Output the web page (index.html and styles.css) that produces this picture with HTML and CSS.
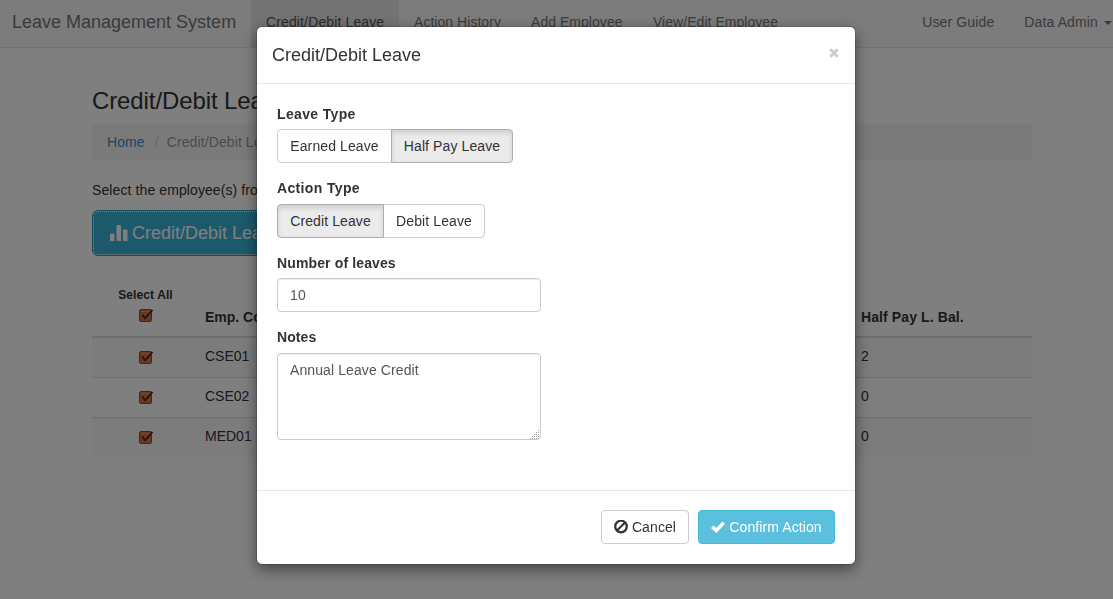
FILE: index.html
```html
<!DOCTYPE html>
<html lang="en">
<head>
<meta charset="utf-8">
<title>Leave Management System</title>
<link rel="stylesheet" href="styles.css">
</head>
<body>
<nav class="navbar">
  <a class="brand">Leave Management System</a>
  <a class="nav-link active">Credit/Debit Leave</a>
  <a class="nav-link history">Action History</a>
  <a class="nav-link add">Add Employee</a>
  <a class="nav-link edit">View/Edit Employee</a>
  <div class="nav-right">
    <a class="nav-link">User Guide</a>
    <a class="nav-link">Data Admin<span class="caret"></span></a>
  </div>
</nav>
<main class="container">
  <h1 class="page-title">Credit/Debit Leave</h1>
  <div class="breadcrumb"><a class="home">Home</a><span class="sep">/</span><span class="current">Credit/Debit Leave</span></div>
  <p class="lead">Select the employee(s) from</p>
  <button class="btn-lg"><svg class="stats" viewBox="0 0 18 18"><path d="M0 10.500q0-1 1-1h2.500q1 0 1 1V17H0zM6.500 2q0-1 1-1H10q1 0 1 1v15H6.500zM13 6.500q0-1 1-1h2.500q1 0 1 1V17H13z"/></svg><span>Credit/Debit Leave</span></button>
  <table class="employees">
    <thead><tr><th class="check"><span class="select-all">Select All</span><svg class="tick" viewBox="0 0 15 13"><use href="#tick"/></svg></th><th class="code">Emp. Code</th><th class="bal">Half Pay L. Bal.</th></tr></thead>
    <tbody>
      <tr><td class="check"><svg class="tick" viewBox="0 0 15 13"><use href="#tick"/></svg></td><td class="code">CSE01</td><td class="bal">2</td></tr>
      <tr><td class="check"><svg class="tick" viewBox="0 0 15 13"><use href="#tick"/></svg></td><td class="code">CSE02</td><td class="bal">0</td></tr>
      <tr><td class="check"><svg class="tick" viewBox="0 0 15 13"><use href="#tick"/></svg></td><td class="code">MED01</td><td class="bal">0</td></tr>
    </tbody>
  </table>
</main>
<svg class="defs"><symbol id="tick" viewBox="0 0 15 13"><rect x=".5" y=".5" width="12" height="12" rx="1.500" fill="#d07048" stroke="#8c4a2c"/><path d="M2 2.500h9" stroke="#e8936a"/><path d="M3 5.500l3 3.800L13.500.8" fill="none" stroke="#4c2a1c" stroke-width="1.800"/></symbol></svg>
<div class="backdrop">
  <section class="modal">
    <header class="modal-header"><h2 class="modal-title">Credit/Debit Leave</h2><svg class="close" viewBox="0 0 10 10"><path d="M1.300 1.300l7.400 7.400M8.700 1.300L1.300 8.700" stroke="#ccc" stroke-width="2.900"/></svg></header>
    <div class="modal-body">
      <div class="field"><label class="label l-type">Leave Type</label><div class="group"><button class="btn earned">Earned Leave</button><button class="btn half on">Half Pay Leave</button></div></div>
      <div class="field"><label class="label a-type">Action Type</label><div class="group"><button class="btn credit on">Credit Leave</button><button class="btn debit">Debit Leave</button></div></div>
      <div class="field"><label class="label number">Number of leaves</label><input class="control" value="10"></div>
      <div class="field"><label class="label">Notes</label><div class="notes"><textarea class="control area">Annual Leave Credit</textarea><svg class="grip" viewBox="0 0 10 10"><path d="M8 0h1v1H8zM6 2h1v1H6zM8 2h1v1H8zM4 4h1v1H4zM6 4h1v1H6zM8 4h1v1H8zM2 6h1v1H2zM4 6h1v1H4zM6 6h1v1H6zM8 6h1v1H8zM0 8h1v1H0zM2 8h1v1H2zM4 8h1v1H4zM6 8h1v1H6zM8 8h1v1H8z" fill="#999"/></svg></div></div>
    </div>
    <footer class="modal-footer">
      <button class="btn cancel"><svg class="icon" viewBox="0 0 14 14"><circle cx="7" cy="6.500" r="5.800" fill="none" stroke="#333" stroke-width="2.300"/><path d="M3 10.500l8-8" stroke="#333" stroke-width="2.200"/></svg>Cancel</button>
      <button class="btn confirm"><svg class="icon" viewBox="0 0 14 14"><path d="M0 8l2.500-2.500 2.800 2.600L11.500 1.500 14 4l-8.700 9z" fill="#fff"/></svg>Confirm Action</button>
    </footer>
  </section>
</div>
</body>
</html>
```
FILE: styles.css
```css
* { box-sizing: border-box; }
html, body { height: 100%; overflow: hidden; }
body { margin: 0; background: #fff; color: #333; font: 14px/20px "Liberation Sans", Arial, sans-serif; letter-spacing: .1px; }
button, input, textarea { font: inherit; letter-spacing: inherit; }

.navbar { display: flex; height: 48px; background: #f8f8f8; border-bottom: 1px solid #e7e7e7; color: #777; white-space: nowrap; }
.brand { width: 251px; padding: 12px 0 0 12px; font-size: 18px; letter-spacing: 0; }
.nav-link { padding: 12px 15px 0; letter-spacing: .04px; }
.nav-link.active { width: 148px; background: #e7e7e7; color: #555; letter-spacing: .13px; }
.nav-link.history { width: 117px; }
.nav-link.add { width: 122px; }
.nav-right { display: flex; margin-left: auto; margin-right: -14px; }
.nav-right .nav-link { letter-spacing: .13px; }
.caret { display: inline-block; margin-left: 6px; vertical-align: middle; border: 4px solid transparent; border-top-color: #777; border-bottom: 0; }

.container { width: 940px; margin: 0 auto 0 92px; padding-top: 40px; }
.page-title { margin: 0 0 10px; font-size: 24px; font-weight: 400; line-height: 26px; letter-spacing: -.1px; }
.breadcrumb { height: 36px; padding: 8px 15px; background: #f5f5f5; border-radius: 4px; color: #999; }
.home { color: #428bca; }
.sep { padding: 0 8px 0 10px; color: #ccc; }
.lead { margin: 20px 0 10px; }
.btn-lg { display: flex; align-items: center; gap: 4px; width: 206px; height: 46px; padding: 0 17px; border: 1px solid #269abc; border-radius: 6px; background: #39b3d7; outline: 1px dotted #fff; outline-offset: -2px; color: #fff; font-size: 18px; letter-spacing: 0; white-space: nowrap; }
.stats { width: 18px; height: 18px; flex: none; fill: #fff; }

.employees { width: 940px; margin-top: 29px; border-spacing: 0; table-layout: fixed; }
.employees th { height: 53px; padding: 0 0 9px; border-bottom: 2px solid #ddd; text-align: left; vertical-align: bottom; }
.employees .check { width: 105px; text-align: center; }
.employees .code { width: 656px; padding-left: 8px; letter-spacing: 0; }
.employees .bal { padding-left: 8px; }
.employees th.check { padding-bottom: 14px; }
.select-all { display: block; height: 24px; font-size: 12px; line-height: 20px; }
.tick { display: block; width: 15px; height: 13px; margin: 0 auto; }
.employees td { height: 40px; padding: 0 0 3px; border-top: 1px solid #ddd; }
.employees tbody tr:first-child td { height: 39px; border-top: 0; }
.employees tbody tr:nth-child(odd) { background: #f9f9f9; }
.employees td.check { padding: 0 0 0 3px; }
.employees th.check { padding-left: 2px; }
.employees th .tick { margin-left: 45px; }
.defs { display: none; }

.backdrop { position: fixed; inset: 0; padding: 27px 0 0 257px; background: rgba(0, 0, 0, .5); }
.modal { display: flex; flex-direction: column; width: 598px; height: 537px; background: #fff; border-radius: 5px; box-shadow: 0 5px 15px rgba(0, 0, 0, .5), 0 0 0 1px rgba(0, 0, 0, .12); }
.modal-header { display: flex; justify-content: space-between; height: 57px; padding: 15px 16px 0 15px; border-bottom: 1px solid #e5e5e5; }
.modal-title { margin: 0; font-size: 18px; font-weight: 400; line-height: 26px; letter-spacing: 0; }
.close { width: 10px; height: 10px; margin-top: 6px; }
.modal-body { flex: 1; padding: 20px 20px 0; }
.field { margin-bottom: 15px; }
.label { display: block; margin-bottom: 5.400px; font-weight: 700; }
.l-type, .a-type { letter-spacing: .35px; }
.number { letter-spacing: .13px; }
.group { display: flex; }
.btn { display: flex; align-items: center; justify-content: center; height: 34px; padding: 0; border: 1px solid #ccc; border-radius: 4px; background: #fff; color: #333; white-space: nowrap; }
.group .btn:first-child { border-radius: 4px 0 0 4px; }
.group .btn:last-child { margin-left: -1px; border-radius: 0 4px 4px 0; }
.btn.on { z-index: 1; background: #ebebeb; border-color: #adadad; box-shadow: inset 0 3px 5px rgba(0, 0, 0, .125); }
.earned { width: 115px; }
.half { width: 122px; }
.credit { width: 107px; }
.debit { width: 102px; }
.control { display: block; width: 264px; height: 34px; padding: 6px 12px; border: 1px solid #ccc; border-radius: 4px; background: #fff; box-shadow: inset 0 1px 1px rgba(0, 0, 0, .075); color: #555; outline: 0; }
.area { height: 87px; resize: none; overflow: hidden; }
.notes { position: relative; width: 264px; }
.grip { position: absolute; right: 1px; bottom: 0; width: 10px; height: 10px; }
.modal-footer { display: flex; justify-content: flex-end; gap: 9px; height: 74px; padding: 19px 20px; border-top: 1px solid #e5e5e5; }
.icon { width: 14px; height: 14px; margin-right: 4px; }
.cancel { width: 88px; }
.confirm { width: 137px; background: #5bc0de; border-color: #46b8da; color: #fff; }
```
